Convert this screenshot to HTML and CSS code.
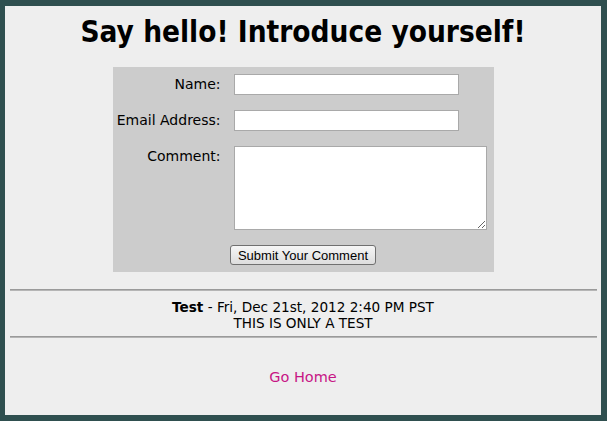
FILE: index.html
```html
<!DOCTYPE html>
<html>
<head>
<meta charset="utf-8">
<link rel="stylesheet" href="styles.css">
</head>
<body>
<div class="page">
  <h1 class="title">Say hello! Introduce yourself!</h1>
  <form class="form">
    <label class="label" for="name">Name:</label>
    <input class="field" id="name" type="text">
    <label class="label" for="email">Email Address:</label>
    <input class="field" id="email" type="text">
    <label class="label" for="comment">Comment:</label>
    <textarea class="area" id="comment"></textarea>
    <div class="actions"><button class="submit" type="button">Submit Your Comment</button></div>
  </form>
  <hr class="rule">
  <div class="comment">
    <div class="meta"><b>Test</b> - Fri, Dec 21st, 2012 2:40 PM PST</div>
    <div class="body">THIS IS ONLY A TEST</div>
  </div>
  <hr class="rule">
  <div class="home"><a class="home-link" href="#">Go Home</a></div>
</div>
</body>
</html>
```
FILE: styles.css
```css
html, body { margin: 0; }
body {
  background: #2f4f4f;
  padding: 6px 6px 6px 5px;
  font-family: "DejaVu Sans", sans-serif;
  font-size: 13.6px;
  color: #000;
}
.page {
  background: #eeeeee;
  height: 409px;
  text-align: center;
  overflow: hidden;
}
.title {
  margin: 0;
  padding-top: 6px;
  font-family: "DejaVu Sans Condensed", "DejaVu Sans", sans-serif;
  font-size: 29.5px;
  line-height: 40px;
  font-weight: bold;
}
.form {
  width: 381px;
  margin: 15px auto 0;
  background: #cccccc;
  box-sizing: border-box;
  padding: 7px 0 7px 0;
  display: grid;
  grid-template-columns: 108px auto;
  column-gap: 13px;
  row-gap: 15px;
  text-align: left;
}
.label {
  text-align: right;
  font-size: 14px;
  padding-top: 2px;
}
.field {
  width: 225px;
  height: 21px;
  box-sizing: border-box;
  border: 1px solid #a9a9a9;
  background: #fff;
  margin: 0;
  padding: 1px 2px;
}
.area {
  width: 253px;
  height: 84px;
  box-sizing: border-box;
  border: 1px solid #a9a9a9;
  background: #fff;
  margin: 0;
}
.actions {
  grid-column: 1 / 3;
  text-align: center;
  margin-top: 0;
  line-height: 0;
}
.submit {
  font-family: "Liberation Sans", Arial, sans-serif;
  font-size: 13px;
  height: 20px;
  width: 146px;
  padding: 0;
  border: 1px solid #707070;
  border-radius: 3px;
  background: linear-gradient(#f6f6f6, #dddddd);
  color: #000;
}
.rule {
  margin: 17px 4px 0 5px;
  border: 0;
  border-top: 1px solid #9a9a9a;
  border-bottom: 1px solid #b5b5b5;
  height: 0;
}
.comment {
  padding: 8px 0 5px;
  line-height: 16px;
}
.comment + .rule { margin-top: 0; }
.home {
  padding-top: 31px;
  font-size: 14.5px;
}
.home-link {
  color: #c71585;
  text-decoration: none;
}
```
